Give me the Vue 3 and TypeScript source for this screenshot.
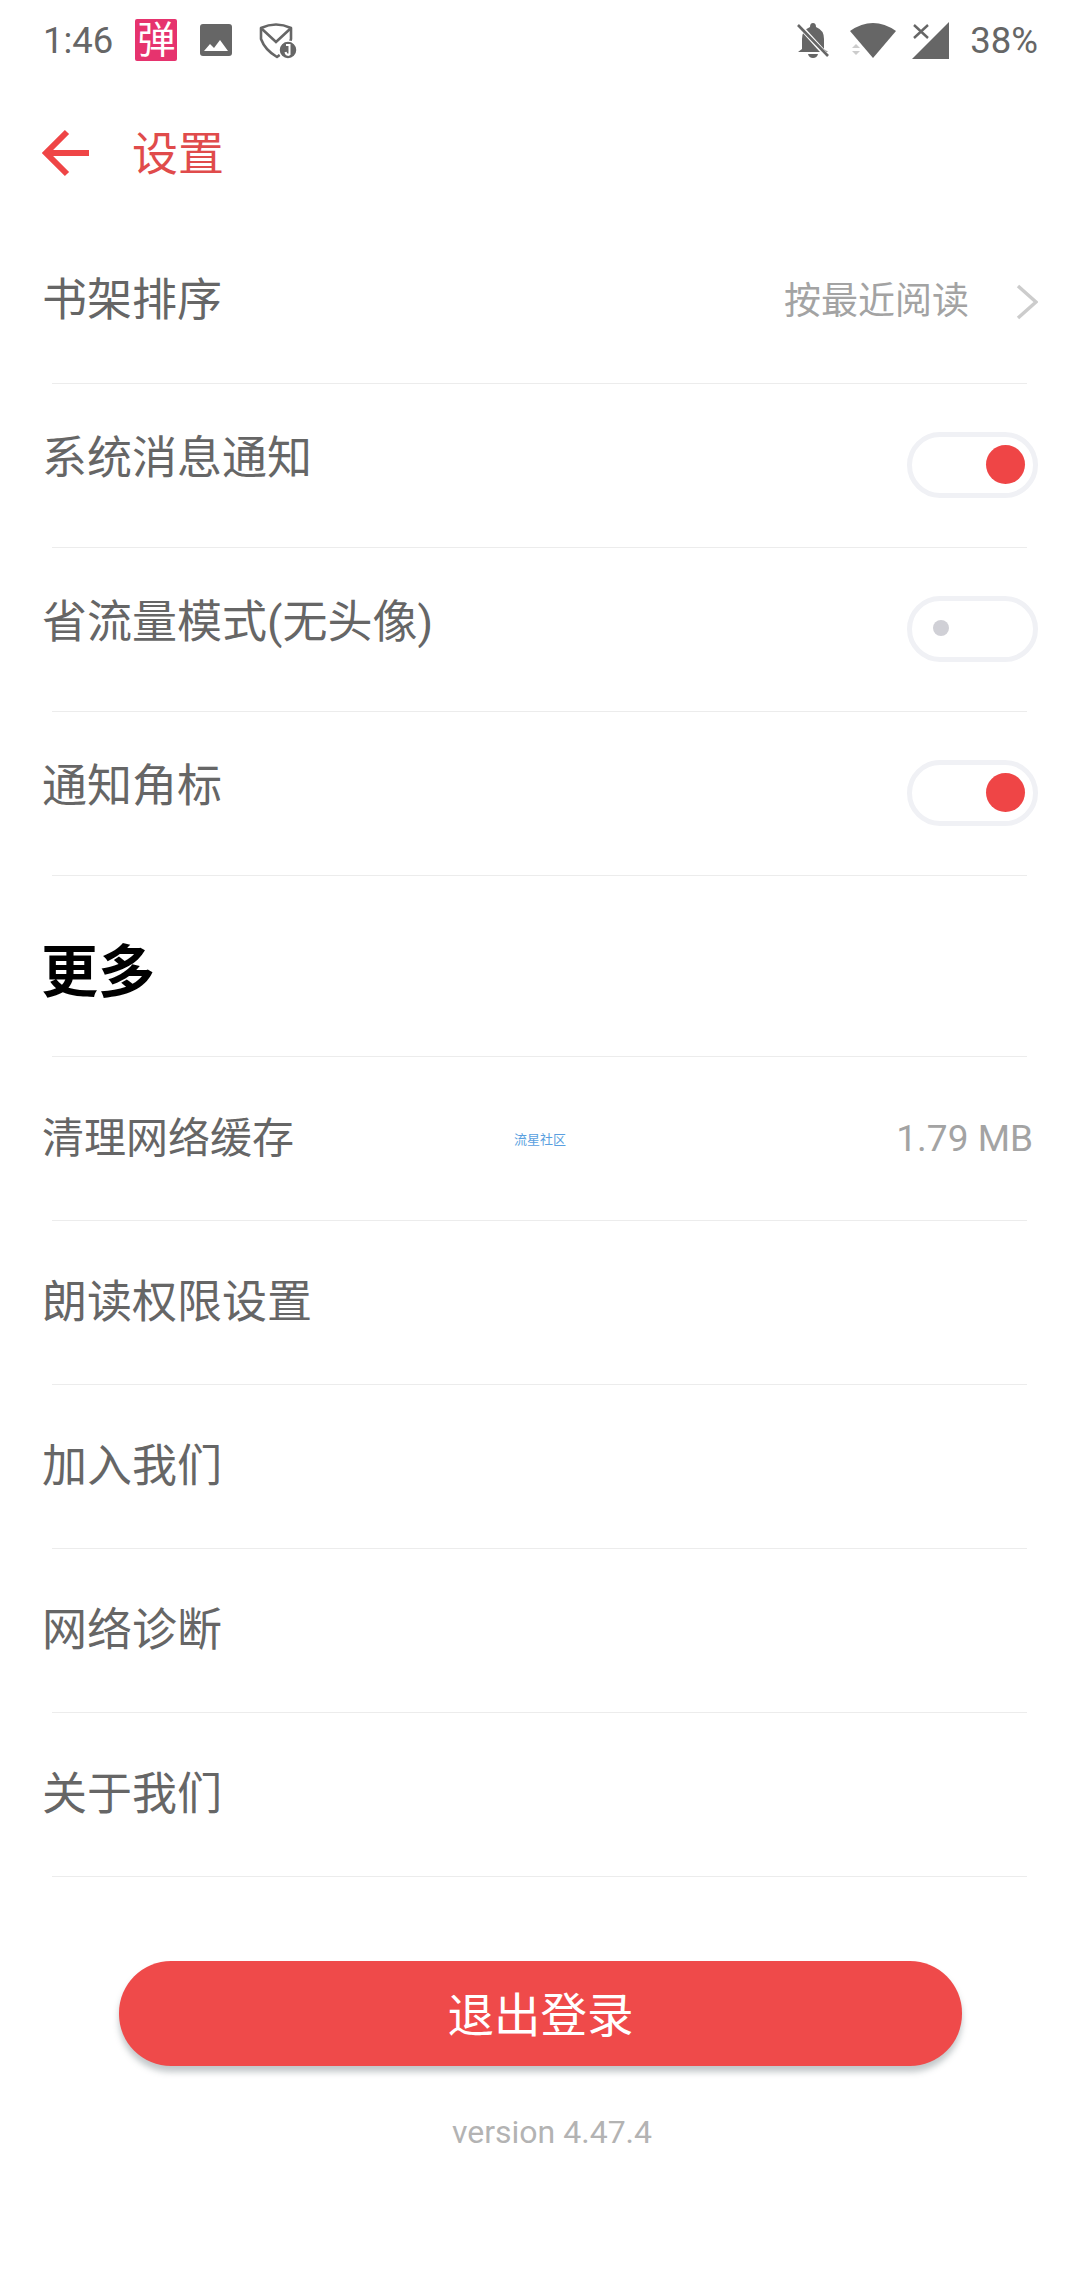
<script setup lang="ts">
interface SwitchRow {
  label: string
  on: boolean
}

const switches: SwitchRow[] = [
  { label: '系统消息通知', on: true },
  { label: '省流量模式(无头像)', on: false },
  { label: '通知角标', on: true },
]

const links = ['朗读权限设置', '加入我们', '网络诊断', '关于我们']
</script>

<template>
  <div class="page">
    <div class="status-bar">
      <div class="status-left">
        <span class="time">1:46</span>
        <span class="dan-icon">弹</span>
        <svg class="ic-image" viewBox="0 0 32 32">
          <rect width="32" height="32" rx="3" fill="#666" />
          <path d="M4 27 L10 20 L14 24 L20 16 L28 27 Z" fill="#fff" />
        </svg>
        <svg class="ic-shield" viewBox="0 0 38 37">
          <path d="M2 6 Q17 -1 32 6 L32 17 Q30 27 18 35 Q6 28 2 17 Z" fill="none" stroke="#666" stroke-width="2.6" stroke-linejoin="round" />
          <path d="M3 7 L17 20 L31 7" fill="none" stroke="#666" stroke-width="2.6" />
          <circle cx="29" cy="28" r="9" fill="#666" stroke="#fff" stroke-width="1.5" />
          <path d="M27 23 H30.5 V33 M26.5 30 Q27 33 30.5 33" fill="none" stroke="#fff" stroke-width="2" />
        </svg>
      </div>
      <div class="status-right">
        <svg class="ic-bell" viewBox="0 0 34 36">
          <path d="M17 1 Q20 1 20 5 Q28 8 28 17 V27 L32 30 H2 L6 27 V17 Q6 8 14 5 Q14 1 17 1 Z" fill="#666" />
          <path d="M12 32 H22 Q21 36 17 36 Q13 36 12 32 Z" fill="#666" />
          <path d="M1 1 L31 34" stroke="#fff" stroke-width="5" />
          <path d="M2 3 L32 34" stroke="#666" stroke-width="2.6" />
        </svg>
        <svg class="ic-wifi" viewBox="0 0 46 36">
          <path d="M0 9 Q23 -7 46 9 L23 36 Z" fill="#666" />
          <path d="M2 26 L6 22 L10 26 Z M2 29 L10 29 L6 33 Z" fill="#ccc" />
        </svg>
        <svg class="ic-signal" viewBox="0 0 38 37">
          <path d="M37 0 V37 H0 Z" fill="#666" />
          <path d="M2 3 L16 16 M16 3 L2 16" stroke="#666" stroke-width="2.4" />
        </svg>
        <span class="battery">38%</span>
      </div>
    </div>

    <header class="app-header">
      <svg class="ic-back" viewBox="0 0 48 48">
        <path d="M47 24 H4 M25 3 L4 24 L25 45" fill="none" stroke="#ef4546" stroke-width="6" />
      </svg>
      <span class="title">设置</span>
    </header>

    <div class="row">
      <span class="label first">书架排序</span>
      <span class="row-value">
        <span class="value-text">按最近阅读</span>
        <svg class="ic-chevron" viewBox="0 0 22 36">
          <path d="M2 2 L20 18 L2 34" fill="none" stroke="#ccc" stroke-width="3.5" />
        </svg>
      </span>
    </div>

    <div v-for="item in switches" :key="item.label" class="row">
      <span class="label label-up">{{ item.label }}</span>
      <span class="toggle" :class="{ on: item.on }"><i class="dot"></i></span>
    </div>

    <h2 class="section">更多</h2>

    <div class="row cache-row">
      <span class="label small">清理网络缓存</span>
      <span class="watermark">流星社区</span>
      <span class="cache-size">1.79 MB</span>
    </div>

    <div v-for="link in links" :key="link" class="row">
      <span class="label">{{ link }}</span>
    </div>

    <div class="footer">
      <button type="button" class="logout">退出登录</button>
      <div class="version">version 4.47.4</div>
    </div>
  </div>
</template>

<style>
html,
body {
  margin: 0;
  background: #fff;
}
</style>

<style scoped>
.page {
  width: 1080px;
  height: 2280px;
  overflow: hidden;
  background: #fff;
  font-family: Roboto, "Noto Sans CJK SC", sans-serif;
  color: #666;
}

.status-bar {
  height: 80px;
  display: flex;
  align-items: center;
  justify-content: space-between;
  padding: 0 42px 0 43px;
}

.status-left,
.status-right {
  display: flex;
  align-items: center;
}

.time,
.battery {
  font-size: 36.5px;
  color: #666;
}

.dan-icon {
  width: 42px;
  height: 42px;
  margin-left: 22px;
  background: #e6336e;
  border-radius: 2px;
  color: #fff;
  font-size: 38px;
  line-height: 42px;
  text-align: center;
}

.ic-image {
  width: 32px;
  height: 32px;
  margin-left: 23px;
}

.ic-shield {
  width: 38px;
  height: 37px;
  margin-left: 27px;
}

.ic-bell {
  width: 34px;
  height: 36px;
}

.ic-wifi {
  width: 46px;
  height: 36px;
  margin-left: 20px;
}

.ic-signal {
  width: 38px;
  height: 37px;
  margin-left: 16px;
}

.battery {
  margin-left: 20px;
}

.app-header {
  height: 140px;
  display: flex;
  align-items: center;
  padding-left: 42px;
  padding-top: 6px;
  box-sizing: border-box;
}

.ic-back {
  width: 48px;
  height: 48px;
}

.title {
  margin-left: 42px;
  margin-bottom: 6px;
  font-size: 46px;
  color: #e04b4b;
}

.row {
  position: relative;
  height: 164px;
  box-sizing: border-box;
  display: flex;
  align-items: center;
  justify-content: space-between;
  padding: 0 42px;
}

.row::after {
  content: '';
  position: absolute;
  left: 52px;
  right: 53px;
  bottom: 0;
  height: 1px;
  background: #ececec;
}

.label {
  margin-bottom: 10px;
  font-size: 45px;
  color: #666;
}

.label.first {
  margin-bottom: 11px;
}

.label.small {
  margin-bottom: 9px;
  font-size: 42px;
}

.label.label-up {
  margin-bottom: 23px;
}

.row-value {
  display: flex;
  align-items: center;
  font-size: 37px;
  color: #a3a3a3;
}

.value-text {
  margin-bottom: 8px;
}

.ic-chevron {
  width: 22px;
  height: 36px;
  margin-left: 47px;
}

.toggle {
  position: relative;
  width: 131px;
  height: 66px;
  margin-bottom: 2px;
  box-sizing: border-box;
  border: 5px solid #f0f1f5;
  border-radius: 33px;
}

.dot {
  position: absolute;
  left: 21px;
  top: 19px;
  width: 16px;
  height: 16px;
  border-radius: 50%;
  background: #d0d0d6;
}

.toggle.on .dot {
  left: 74px;
  top: 8px;
  width: 39px;
  height: 39px;
  background: #ef4546;
}

.section {
  position: relative;
  height: 181px;
  box-sizing: border-box;
  margin: 0;
  padding: 0 41px;
  display: flex;
  align-items: center;
  font-size: 57px;
  font-weight: 700;
  color: #000;
}

.section::after {
  content: '';
  position: absolute;
  left: 52px;
  right: 53px;
  bottom: 0;
  height: 1px;
  background: #ececec;
}

.cache-row {
  padding-right: 47px;
}

.cache-size {
  margin-bottom: 2px;
  font-size: 37px;
  color: #a3a3a3;
}

.watermark {
  position: absolute;
  left: 514px;
  top: 75px;
  font-size: 13px;
  line-height: 16px;
  color: #5a9fe0;
}

.footer {
  display: flex;
  flex-direction: column;
  align-items: center;
  padding-top: 84px;
}

.logout {
  width: 843px;
  height: 105px;
  margin-left: 1px;
  padding: 0 0 4px;
  border: none;
  border-radius: 52px;
  background: #ef4a4a;
  color: #fff;
  font-family: inherit;
  font-size: 46.5px;
  box-shadow: 0 6px 6px rgba(120, 130, 135, 0.45);
}

.version {
  margin-top: 47px;
  margin-left: 24px;
  font-size: 32px;
  color: #b3b3b3;
}
</style>
